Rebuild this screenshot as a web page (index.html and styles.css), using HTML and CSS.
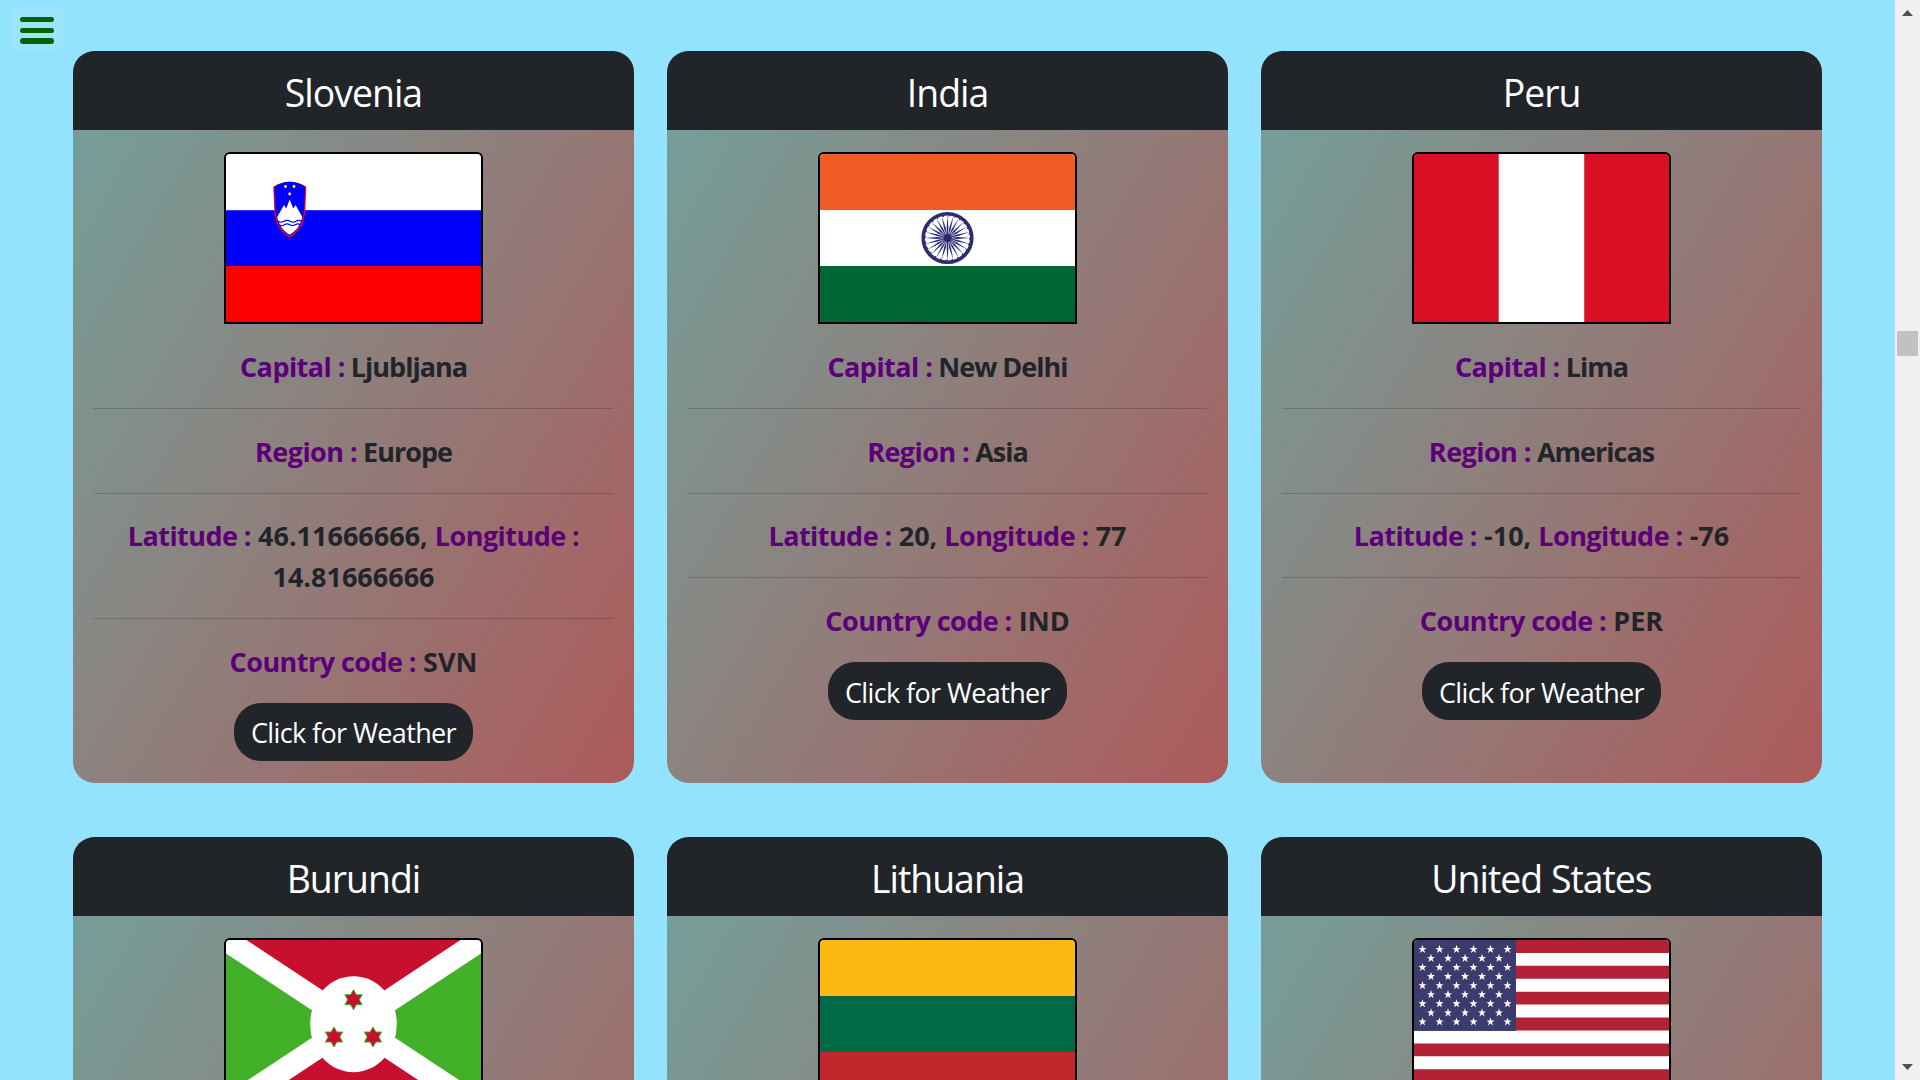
FILE: index.html
```html
<!DOCTYPE html>
<html lang="en">
<head>
<meta charset="utf-8">
<title>Countries</title>
<link rel="stylesheet" href="styles.css">
</head>
<body>
<div class="page">
  <main class="grid">
    <article class="card">
      <h3 class="card-header">Slovenia</h3>
      <div class="card-body">
        <svg class="flag" viewBox="0 0 255 168" preserveAspectRatio="none">
          <rect width="255" height="168" fill="#fff"/>
          <rect y="56.2" width="255" height="56" fill="#00f"/>
          <rect y="112" width="255" height="56" fill="#f00"/>
          <path d="M47.3 32.7Q63.8 22.7 80.3 32.7L79.3 56C79 70 72 79 63.8 83.7C55.500 79 48.500 70 48.300 56Z" fill="#f00"/>
          <path d="M48.300 32.700Q63.800 22.700 79.300 32.700L78 56C77.500 69 71 77.500 63.800 82C56.500 77.500 50 69 49.500 56Z" fill="#00f"/>
          <path d="M63.700 45.500L67.300 54.500L69.600 51L76.300 63C74.500 71.500 70 77 63.700 80.700C57.500 77 53 71.500 51.200 63L58 51L60.200 54.500Z" fill="#fff"/>
          <path d="M52 67.300q3 1.800 6 0t6 0t6 0t5.500 0M53 70.800q2.700 1.800 5.400 0t5.400 0t5.400 0t5 0" fill="none" stroke="#00f" stroke-width="1.100"/>
          <g fill="#ff0"><circle cx="59.500" cy="32.500" r="1.400"/><circle cx="68" cy="32.500" r="1.400"/><circle cx="63.700" cy="40" r="1.400"/></g>
        </svg>
        <p><b>Capital :</b> Ljubljana</p><hr>
        <p><b>Region :</b> Europe</p><hr>
        <p class="num"><b>Latitude :</b> 46.11666666, <b>Longitude :</b> 14.81666666</p><hr>
        <p class="num"><b>Country code :</b> SVN</p>
        <button class="btn">Click for Weather</button>
      </div>
    </article>
    <article class="card">
      <h3 class="card-header">India</h3>
      <div class="card-body">
        <svg class="flag" viewBox="0 0 255 168" preserveAspectRatio="none">
          <defs>
            <path id="spoke" d="M0 0L-.9 -10L0 -23L.9 -10Z"/>
            <g id="spokes"><use href="#spoke"/><use href="#spoke" transform="rotate(15)"/><use href="#spoke" transform="rotate(30)"/><use href="#spoke" transform="rotate(45)"/><use href="#spoke" transform="rotate(60)"/><use href="#spoke" transform="rotate(75)"/></g>
          </defs>
          <rect width="255" height="168" fill="#fff"/>
          <rect width="255" height="56" fill="#f15b25"/>
          <rect y="112" width="255" height="56" fill="#006933"/>
          <g transform="translate(127.500 84)" fill="#2e2c70">
            <circle r="24.300" fill="none" stroke="#2e2c70" stroke-width="3.600"/>
            <circle r="22.200" fill="none" stroke="#2e2c70" stroke-width="1.200" stroke-dasharray="1.500 4.312"/>
            <circle r="4.300"/>
            <use href="#spokes"/><use href="#spokes" transform="rotate(90)"/><use href="#spokes" transform="rotate(180)"/><use href="#spokes" transform="rotate(270)"/>
          </g>
        </svg>
        <p><b>Capital :</b> New Delhi</p><hr>
        <p><b>Region :</b> Asia</p><hr>
        <p class="num"><b>Latitude :</b> 20, <b>Longitude :</b> 77</p><hr>
        <p class="num"><b>Country code :</b> IND</p>
        <button class="btn">Click for Weather</button>
      </div>
    </article>
    <article class="card">
      <h3 class="card-header">Peru</h3>
      <div class="card-body">
        <svg class="flag" viewBox="0 0 255 168" preserveAspectRatio="none">
          <rect width="255" height="168" fill="#d91023"/>
          <rect x="84.700" width="85.500" height="168" fill="#fff"/>
        </svg>
        <p><b>Capital :</b> Lima</p><hr>
        <p><b>Region :</b> Americas</p><hr>
        <p class="num"><b>Latitude :</b> -10, <b>Longitude :</b> -76</p><hr>
        <p class="num"><b>Country code :</b> PER</p>
        <button class="btn">Click for Weather</button>
      </div>
    </article>
    <article class="card card-cut">
      <h3 class="card-header">Burundi</h3>
      <div class="card-body">
        <svg class="flag" viewBox="0 0 255 168" preserveAspectRatio="none">
          <defs><path id="hexagram" d="M0 -10L2.900 -5H8.660L5.800 0L8.660 5H2.900L0 10L-2.900 5H-8.660L-5.800 0L-8.660 -5H-2.900Z" fill="#c8102e" stroke="#43b02a" stroke-width="1"/></defs>
          <rect width="255" height="168" fill="#fff"/>
          <path d="M20.500 0H234.500L127.500 70.800ZM20.500 168H234.500L127.500 97.200Z" fill="#c8102e"/>
          <path d="M0 13.500L106.800 84L0 154.500ZM255 13.500L148.200 84L255 154.500Z" fill="#43b02a"/>
          <ellipse cx="127.500" cy="84.200" rx="43.300" ry="48" fill="#fff"/>
          <use href="#hexagram" x="127.500" y="59.700"/><use href="#hexagram" x="108" y="97"/><use href="#hexagram" x="147" y="97"/>
        </svg>
      </div>
    </article>
    <article class="card card-cut">
      <h3 class="card-header">Lithuania</h3>
      <div class="card-body">
        <svg class="flag" viewBox="0 0 255 168" preserveAspectRatio="none">
          <rect width="255" height="168" fill="#fdb913"/>
          <rect y="56" width="255" height="112" fill="#006a44"/>
          <rect y="112" width="255" height="56" fill="#c1272d"/>
        </svg>
      </div>
    </article>
    <article class="card card-cut">
      <h3 class="card-header">United States</h3>
      <div class="card-body">
        <svg class="flag" viewBox="0 0 255 168" preserveAspectRatio="none">
          <defs>
            <path id="star" d="M0 -4.400L1 -1.300H4L1.600 .6L2.600 3.700L0 1.800L-2.600 3.700L-1.600 .6L-4 -1.300H-1Z" fill="#fff"/>
            <g id="five"><use href="#star" x="17"/><use href="#star" x="34"/><use href="#star" x="51"/><use href="#star" x="68"/><use href="#star" x="85"/></g>
            <g id="six"><use href="#star" x="8.500"/><use href="#five" x="8.500"/></g>
          </defs>
          <rect width="255" height="168" fill="#fff"/>
          <path d="M0 6.460H255M0 32.300H255M0 58.150H255M0 84H255M0 109.850H255M0 135.700H255M0 161.540H255" stroke="#b22234" stroke-width="12.920"/>
          <rect width="102" height="90.900" fill="#3c3b6e"/>
          <use href="#six" y="9.200"/><use href="#six" y="27.300"/><use href="#six" y="45.500"/><use href="#six" y="63.600"/><use href="#six" y="81.800"/>
          <use href="#five" y="18.200"/><use href="#five" y="36.400"/><use href="#five" y="54.500"/><use href="#five" y="72.700"/>
        </svg>
      </div>
    </article>
  </main>
  <aside class="scrollbar">
    <svg width="11" height="6" viewBox="0 0 11 6"><path d="M0 6L5.500 0L11 6Z" fill="#505050"/></svg>
    <div class="thumb"></div>
    <svg width="11" height="6" viewBox="0 0 11 6"><path d="M0 0L5.500 6L11 0Z" fill="#505050"/></svg>
  </aside>
</div>
<button class="menu" aria-label="Menu">
  <svg width="34" height="27" viewBox="0 0 34 27" fill="#006400"><rect width="34" height="5" rx="2.500"/><rect y="11" width="34" height="5" rx="2.500"/><rect y="21" width="34" height="6" rx="3"/></svg>
</button>
</body>
</html>
```
FILE: styles.css
```css
* { box-sizing: border-box; }
body {
  margin: 0;
  height: 1080px;
  overflow: hidden;
  background: #93e3ff;
  color: #212529;
  font-family: "Segoe UI", "Open Sans", "Noto Sans", sans-serif;
  font-size: 27px;
  line-height: 40.5px;
}
.page { display: flex; height: 1080px; }
.grid {
  flex: 1;
  display: grid;
  grid-template-columns: repeat(3, 561px);
  grid-template-rows: 732px 243px;
  gap: 54px 33px;
  padding: 51px 73px 0;
}
.card {
  border-radius: 21.6px;
  overflow: hidden;
  background: linear-gradient(120deg, #72a29c, #ad5a5a) 0 0 / 100% 732px no-repeat;
  text-align: center;
}
.card-cut { border-radius: 21.6px 21.6px 0 0; }
.card-header {
  margin: 0;
  height: 79px;
  padding-top: 13.5px;
  background: #212529;
  color: #fff;
  font-size: 37.4px;
  font-weight: 400;
  line-height: 56.7px;
  letter-spacing: -1px;
}
.card-body { padding: 22px 21px; }
.flag {
  display: block;
  width: 259px;
  height: 172px;
  margin: 0 auto 22px;
  border: 2px solid #000;
  border-radius: 6px 6px 0 0;
}
p {
  margin: 0 0 -1px;
  padding-top: 1px;
  font-weight: 700;
  letter-spacing: -1px;
}
p.num { letter-spacing: 0; }
b { color: #5c007a; font-weight: 700; letter-spacing: -0.55px; }
hr {
  margin: 21.6px 0;
  border: 0;
  border-top: 1px solid rgba(33, 37, 41, .25);
}
.btn {
  display: block;
  width: 239px;
  height: 58px;
  margin: 21.7px auto 0;
  padding: 3px 0 0;
  border: 0;
  border-radius: 27px;
  background: #212529;
  color: #fff;
  font: inherit;
  letter-spacing: -0.62px;
  white-space: nowrap;
}
.scrollbar {
  width: 25px;
  padding: 10px 0;
  display: flex;
  flex-direction: column;
  align-items: center;
  background: #f0f0f0;
}
.thumb { width: 21px; height: 25px; margin: 315px 0 auto; background: #c1c1c1; }
.menu {
  position: absolute;
  left: 11px;
  top: 9px;
  width: 52px;
  height: 41px;
  padding: 8px 9px;
  border: 0;
  background: #9be5fb;
}
.menu svg { display: block; }
```
